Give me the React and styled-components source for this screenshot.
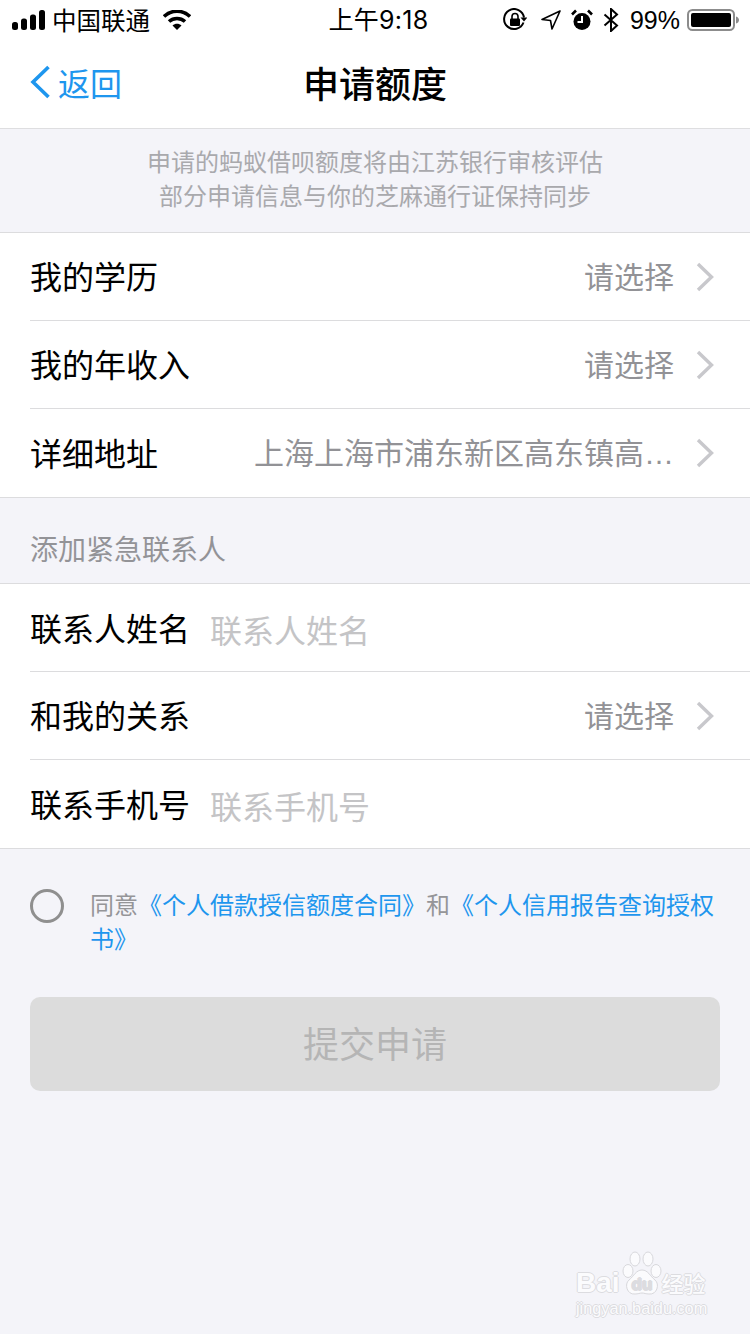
import React from "react";
import styled, { createGlobalStyle } from "styled-components";

const FONT = `"Noto Sans CJK SC", "Liberation Sans", sans-serif`;
const BLUE = "#1e96ee";

const GlobalStyle = createGlobalStyle`
  html, body {
    margin: 0;
    padding: 0;
    background: #f4f4f9;
    font-family: ${FONT};
  }
`;

const Page = styled.div`
  position: relative;
  width: 750px;
  height: 1334px;
  overflow: hidden;
  background: #f4f4f9;
`;

const StatusBar = styled.div`
  height: 40px;
  background: #fff;
  display: grid;
  grid-template-columns: 1fr auto 1fr;
  align-items: center;
  padding: 0 11px 0 12px;
  color: #000;
`;

const StatusGroup = styled.div`
  display: flex;
  align-items: center;
  justify-content: ${(p) => (p.$end ? "flex-end" : "flex-start")};
  gap: ${(p) => p.$gap || 0}px;
`;

const Carrier = styled.span`
  font-size: 24.5px;
  line-height: 40px;
  margin: 0 13px 0 7px;
`;

const Clock = styled.span`
  font-size: 25px;
  line-height: 40px;
  margin-left: 6px;
  letter-spacing: 0.3px;
  font-family: Inter, "Noto Sans CJK SC", sans-serif;
`;

const Percent = styled.span`
  font-family: "Liberation Sans", sans-serif;
  font-size: 25px;
  line-height: 40px;
  margin: 0 -3px 0 1px;
`;

const NavBar = styled.header`
  height: 84px;
  background: #fff;
  border-bottom: 1px solid #dedee0;
  display: grid;
  grid-template-columns: 1fr auto 1fr;
  align-items: center;
  padding: 0 30px 4px;
`;

const BackLink = styled.div`
  display: flex;
  align-items: center;
  gap: 7px;
  color: ${BLUE};
  font-size: 32px;
  line-height: 44px;
`;

const NavTitle = styled.h1`
  margin: 0;
  font-size: 36px;
  line-height: 50px;
  font-weight: 500;
  color: #000;
`;

const Notice = styled.p`
  margin: 0;
  height: 103px;
  padding-top: 15px;
  box-sizing: border-box;
  text-align: center;
  color: #a9a9ad;
  font-size: 24px;
  line-height: 34px;
`;

const Group = styled.section`
  background: #fff;
  border-top: 1px solid #dcdcde;
  border-bottom: 1px solid #dcdcde;
  padding: 0 0 1px 30px;
`;

const Row = styled.div`
  height: 87px;
  display: flex;
  align-items: center;
  padding-right: 36px;
  & + & {
    border-top: 1px solid #dcdcde;
  }
`;

const RowLabel = styled.span`
  flex: none;
  padding-bottom: ${(p) => p.$lift ?? 4}px;
  font-size: 32px;
  line-height: 44px;
  color: #000;
`;

const RowValue = styled.span`
  flex: 1;
  min-width: 0;
  padding-top: 2px;
  text-align: right;
  font-family: "Liberation Sans", "Noto Sans CJK SC", sans-serif;
  font-size: 30px;
  line-height: 44px;
  color: #929296;
  white-space: nowrap;
`;

const RowInput = styled.span`
  margin-left: 20px;
  padding-top: 2px;
  font-size: 32px;
  line-height: 44px;
  color: #c4c4c6;
`;

const Chevron = styled.svg`
  flex: none;
  margin-left: 22px;
`;

const SectionTitle = styled.h2`
  margin: 0;
  height: 85px;
  padding: 30px 0 0 30px;
  box-sizing: border-box;
  font-size: 28px;
  line-height: 40px;
  font-weight: 400;
  color: #939397;
`;

const Agreement = styled.div`
  display: flex;
  align-items: flex-start;
  padding: 39px 30px 0;
`;

const Radio = styled.span`
  flex: none;
  width: 34px;
  height: 34px;
  margin-top: 1px;
  border: 3px solid #8f8f8f;
  border-radius: 50%;
  box-sizing: border-box;
`;

const AgreementText = styled.p`
  margin: -1px 0 0 26px;
  font-size: 24px;
  line-height: 34px;
  color: #959598;
`;

const DocLink = styled.span`
  color: ${BLUE};
`;

const SubmitButton = styled.button`
  display: block;
  width: 690px;
  height: 94px;
  margin: 42px 30px 0;
  padding: 0 0 4px;
  border: none;
  border-radius: 10px;
  background: #dcdcdc;
  color: #b5b5b5;
  font-family: ${FONT};
  font-size: 36px;
`;

const LockSvg = styled.svg`
  margin-right: 4px;
`;

const Watermark = styled.div`
  position: absolute;
  left: 576px;
  top: 1252px;
  width: 140px;
  color: #fbfbfd;
  text-shadow: 1px 0 0 #dcdce0, -1px 0 0 #dcdce0, 0 1px 0 #dcdce0, 0 -1px 0 #dcdce0;
`;

const WatermarkTop = styled.div`
  display: flex;
  align-items: flex-end;
  height: 46px;
  font-family: "Liberation Sans", sans-serif;
  font-size: 28px;
  font-weight: 700;
  line-height: 30px;
`;

const WatermarkCjk = styled.span`
  font-family: ${FONT};
  font-size: 22px;
  line-height: 32px;
  font-weight: 500;
`;

const WatermarkUrl = styled.div`
  font-family: "Liberation Sans", sans-serif;
  font-size: 16.3px;
  line-height: 18px;
  margin-top: 1px;
  white-space: nowrap;
`;

const Paw = styled.svg`
  flex: none;
  margin: 0 0 1px 2px;
`;

const PAW_STROKE = "#d8d8dc";

function SignalIcon() {
  return (
    <svg width="33" height="20" viewBox="0 0 33 20">
      <rect x="0" y="12" width="6" height="8" rx="2.5" fill="#000" />
      <rect x="9" y="8.5" width="6" height="11.5" rx="2.5" fill="#000" />
      <rect x="18" y="4.5" width="6" height="15.5" rx="2.5" fill="#000" />
      <rect x="27" y="0" width="6" height="20" rx="2.5" fill="#000" />
    </svg>
  );
}

function WifiIcon() {
  return (
    <svg width="28" height="20" viewBox="0 0 28 20">
      <path d="M1 6.5C8.5-.5 19.5-.5 27 6.5" stroke="#000" strokeWidth="3.6" fill="none" />
      <path d="M6 11.5C10.5 7.5 17.5 7.5 22 11.5" stroke="#000" strokeWidth="3.6" fill="none" />
      <path d="M9.5 15.5C12 13 16 13 18.5 15.5L14 20Z" fill="#000" />
    </svg>
  );
}

function RotationLockIcon() {
  return (
    <LockSvg width="24" height="24" viewBox="0 0 24 24">
      <path d="M20.5 14.5A10 10 0 1 1 21 9.5" stroke="#000" strokeWidth="2" fill="none" />
      <path d="M17.5 9.5h7l-3.5 4z" fill="#000" />
      <rect x="7" y="10.5" width="10" height="7.5" rx="1" fill="#000" />
      <path d="M9 11V8.5a3 3 0 0 1 6 0V11" stroke="#000" strokeWidth="1.6" fill="none" />
    </LockSvg>
  );
}

function LocationIcon() {
  return (
    <svg width="20" height="20" viewBox="0 0 20 20">
      <path d="M19 1L1 9.5l8.5 1 1.5 8.5z" stroke="#000" strokeWidth="1.6" fill="none" strokeLinejoin="round" />
    </svg>
  );
}

function AlarmIcon() {
  return (
    <svg width="22" height="22" viewBox="0 0 22 22">
      <circle cx="11" cy="12.5" r="8.5" fill="#000" />
      <path d="M11 7v6H6.5" stroke="#fff" strokeWidth="2" fill="none" />
      <path d="M1 5.5L5 1.5M21 5.5L17 1.5" stroke="#000" strokeWidth="2.6" />
    </svg>
  );
}

function BluetoothIcon() {
  return (
    <svg width="16" height="24" viewBox="0 0 16 24">
      <path d="M1.5 6.5L14 17.5 8 23V1l6 5.5L1.5 17.5" stroke="#000" strokeWidth="2" fill="none" />
    </svg>
  );
}

function BatteryIcon() {
  return (
    <svg width="52" height="24" viewBox="0 0 52 24">
      <rect x="1" y="2" width="46" height="20" rx="4.5" stroke="#8c8c8c" strokeWidth="2" fill="#fff" />
      <rect x="4" y="5" width="40" height="14" rx="2" fill="#000" />
      <path d="M49 8.5c2 .5 3 2 3 3.5s-1 3-3 3.5z" fill="#8c8c8c" />
    </svg>
  );
}

function RowChevron() {
  return (
    <Chevron width="18" height="30" viewBox="0 0 18 30">
      <path d="M2 2l13.5 13L2 28" stroke="#c8c8cc" strokeWidth="3.4" fill="none" />
    </Chevron>
  );
}

function SelectRow({ label, value, lift }) {
  return (
    <Row>
      <RowLabel $lift={lift}>{label}</RowLabel>
      <RowValue>{value}</RowValue>
      <RowChevron />
    </Row>
  );
}

function InputRow({ label, placeholder, lift }) {
  return (
    <Row>
      <RowLabel $lift={lift}>{label}</RowLabel>
      <RowInput>{placeholder}</RowInput>
    </Row>
  );
}

export default function App() {
  return (
    <Page>
      <GlobalStyle />
      <StatusBar>
        <StatusGroup>
          <SignalIcon />
          <Carrier>中国联通</Carrier>
          <WifiIcon />
        </StatusGroup>
        <Clock>上午9:18</Clock>
        <StatusGroup $end $gap={10}>
          <RotationLockIcon />
          <LocationIcon />
          <AlarmIcon />
          <BluetoothIcon />
          <Percent>99%</Percent>
          <BatteryIcon />
        </StatusGroup>
      </StatusBar>

      <NavBar>
        <BackLink>
          <svg width="21" height="34" viewBox="0 0 21 34">
            <path d="M18.5 2L3 17l15.5 15" stroke={BLUE} strokeWidth="3.6" fill="none" />
          </svg>
          返回
        </BackLink>
        <NavTitle>申请额度</NavTitle>
        <span />
      </NavBar>

      <Notice>
        申请的蚂蚁借呗额度将由江苏银行审核评估
        <br />
        部分申请信息与你的芝麻通行证保持同步
      </Notice>

      <Group>
        <SelectRow label="我的学历" value="请选择" />
        <SelectRow label="我的年收入" value="请选择" />
        <SelectRow label="详细地址" value="上海上海市浦东新区高东镇高…" lift={2} />
      </Group>

      <SectionTitle>添加紧急联系人</SectionTitle>

      <Group>
        <InputRow label="联系人姓名" placeholder="联系人姓名" lift={2} />
        <SelectRow label="和我的关系" value="请选择" />
        <InputRow label="联系手机号" placeholder="联系手机号" lift={2} />
      </Group>

      <Agreement>
        <Radio />
        <AgreementText>
          同意<DocLink>《个人借款授信额度合同》</DocLink>和<DocLink>《个人信用报告查询授权书》</DocLink>
        </AgreementText>
      </Agreement>

      <SubmitButton disabled>提交申请</SubmitButton>

      <Watermark>
        <WatermarkTop>
          Bai
          <Paw width="40" height="46" viewBox="0 0 40 46">
            <ellipse cx="6" cy="20" rx="5" ry="6.5" fill="#fbfbfd" stroke={PAW_STROKE} />
            <ellipse cx="13" cy="8" rx="5" ry="7" fill="#fbfbfd" stroke={PAW_STROKE} />
            <ellipse cx="26" cy="8" rx="5" ry="7" fill="#fbfbfd" stroke={PAW_STROKE} />
            <ellipse cx="34" cy="20" rx="5" ry="6.5" fill="#fbfbfd" stroke={PAW_STROKE} />
            <path d="M20 19c6 0 8 6 13 10 5 4 2 15-6 14-3 0-5-1-7-1s-4 1-7 1c-8 1-11-10-6-14 5-4 7-10 13-10z" fill="#fbfbfd" stroke={PAW_STROKE} />
            <text x="20" y="39" textAnchor="middle" fontFamily="Liberation Sans" fontSize="17" fontWeight="700" fill="#dcdce0">du</text>
          </Paw>
          <WatermarkCjk>经验</WatermarkCjk>
        </WatermarkTop>
        <WatermarkUrl>jingyan.baidu.com</WatermarkUrl>
      </Watermark>
    </Page>
  );
}
